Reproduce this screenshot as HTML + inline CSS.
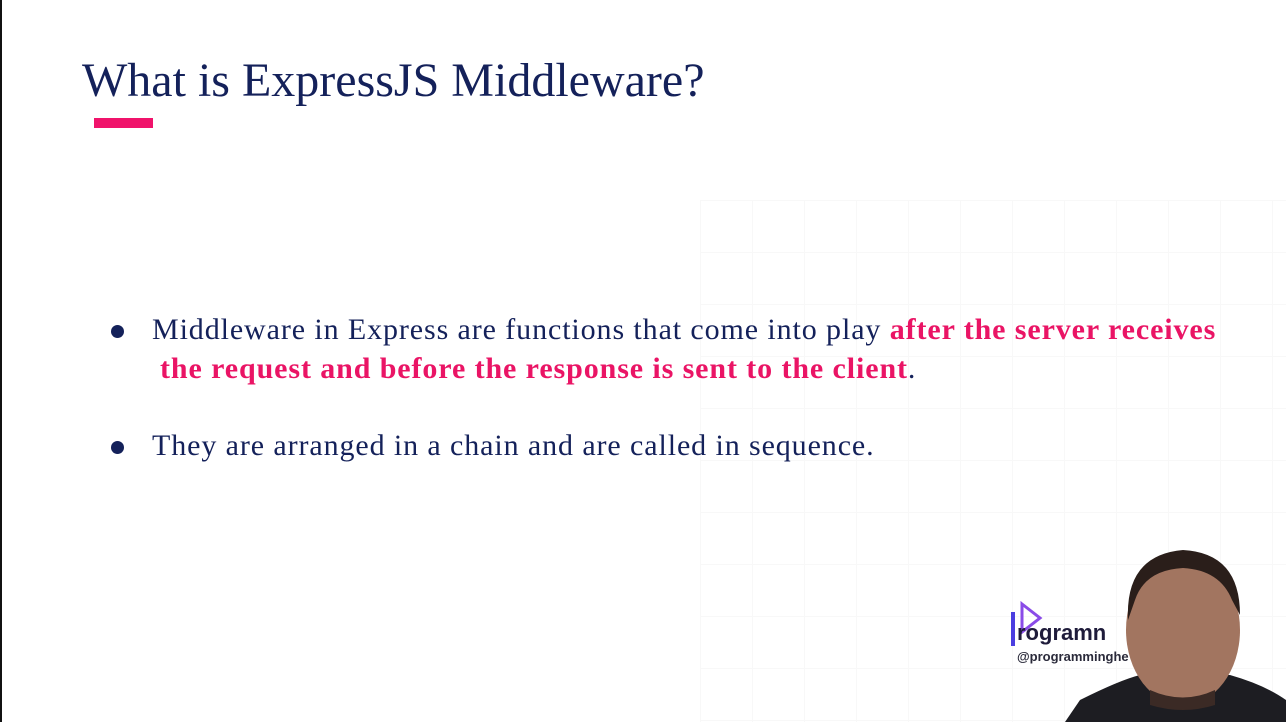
<!DOCTYPE html>
<html><head><meta charset="utf-8"><style>
body{margin:0;width:1286px;height:722px;overflow:hidden;background:#fff;position:relative;font-family:"Liberation Serif",serif;}
.lb{position:absolute;left:0;top:0;width:2px;height:722px;background:#111;}
h1{position:absolute;left:82px;top:53px;margin:0;font-weight:normal;font-size:48px;color:#14215a;white-space:nowrap;}
.bar{position:absolute;left:94px;top:118px;width:59px;height:10px;background:#f0136b;}
.t{position:absolute;font-size:30px;letter-spacing:0.9px;color:#14215a;white-space:nowrap;}
.p{color:#ea1465;font-weight:bold;}
.dot{position:absolute;width:13px;height:13px;border-radius:50%;background:#14215a;}
.grid{position:absolute;left:700px;top:200px;width:586px;height:522px;background-image:linear-gradient(#f2f2f2 1px,transparent 1px),linear-gradient(90deg,#f2f2f2 1px,transparent 1px);background-size:52px 52px;opacity:.5}
</style></head><body>
<div class="grid"></div>
<div class="lb"></div>
<h1>What is ExpressJS Middleware?</h1>
<div class="bar"></div>
<div class="dot" style="left:111px;top:325px"></div>
<div class="t" style="left:152px;top:313px">Middleware in Express are functions that come into play <span class="p">after the server receives</span></div>
<div class="t" style="left:160px;top:352px"><span class="p">the request and before the response is sent to the client</span>.</div>
<div class="dot" style="left:111px;top:441px"></div>
<div class="t" style="left:152px;top:429px">They are arranged in a chain and are called in sequence.</div>
<svg style="position:absolute;left:0;top:0" width="1286" height="722">
<polygon points="1022,604 1040,618 1022,632" fill="none" stroke="#8a4be8" stroke-width="3"/>
<rect x="1011" y="612" width="4" height="34" fill="#4b3ee0"/>
<text x="1017" y="640" font-family="Liberation Sans,sans-serif" font-weight="bold" font-size="22" fill="#1e1b3a">rogramn</text>
<text x="1017" y="661" font-family="Liberation Sans,sans-serif" font-weight="bold" font-size="13" fill="#2a2a3a">@programminghe</text>
<path d="M1065,722 L1080,700 Q1120,680 1140,675 L1230,675 Q1265,685 1286,700 L1286,722Z" fill="#1d1d22"/>
<ellipse cx="1183" cy="630" rx="57" ry="75" fill="#a27560"/>
<path d="M1128,620 Q1125,555 1183,550 Q1240,553 1240,615 L1232,600 Q1220,570 1183,568 Q1145,570 1135,600Z" fill="#2a1e1a"/>
<path d="M1150,690 Q1183,705 1215,690 L1215,705 Q1183,715 1150,705Z" fill="#3b2a25"/>
</svg>
</body></html>
